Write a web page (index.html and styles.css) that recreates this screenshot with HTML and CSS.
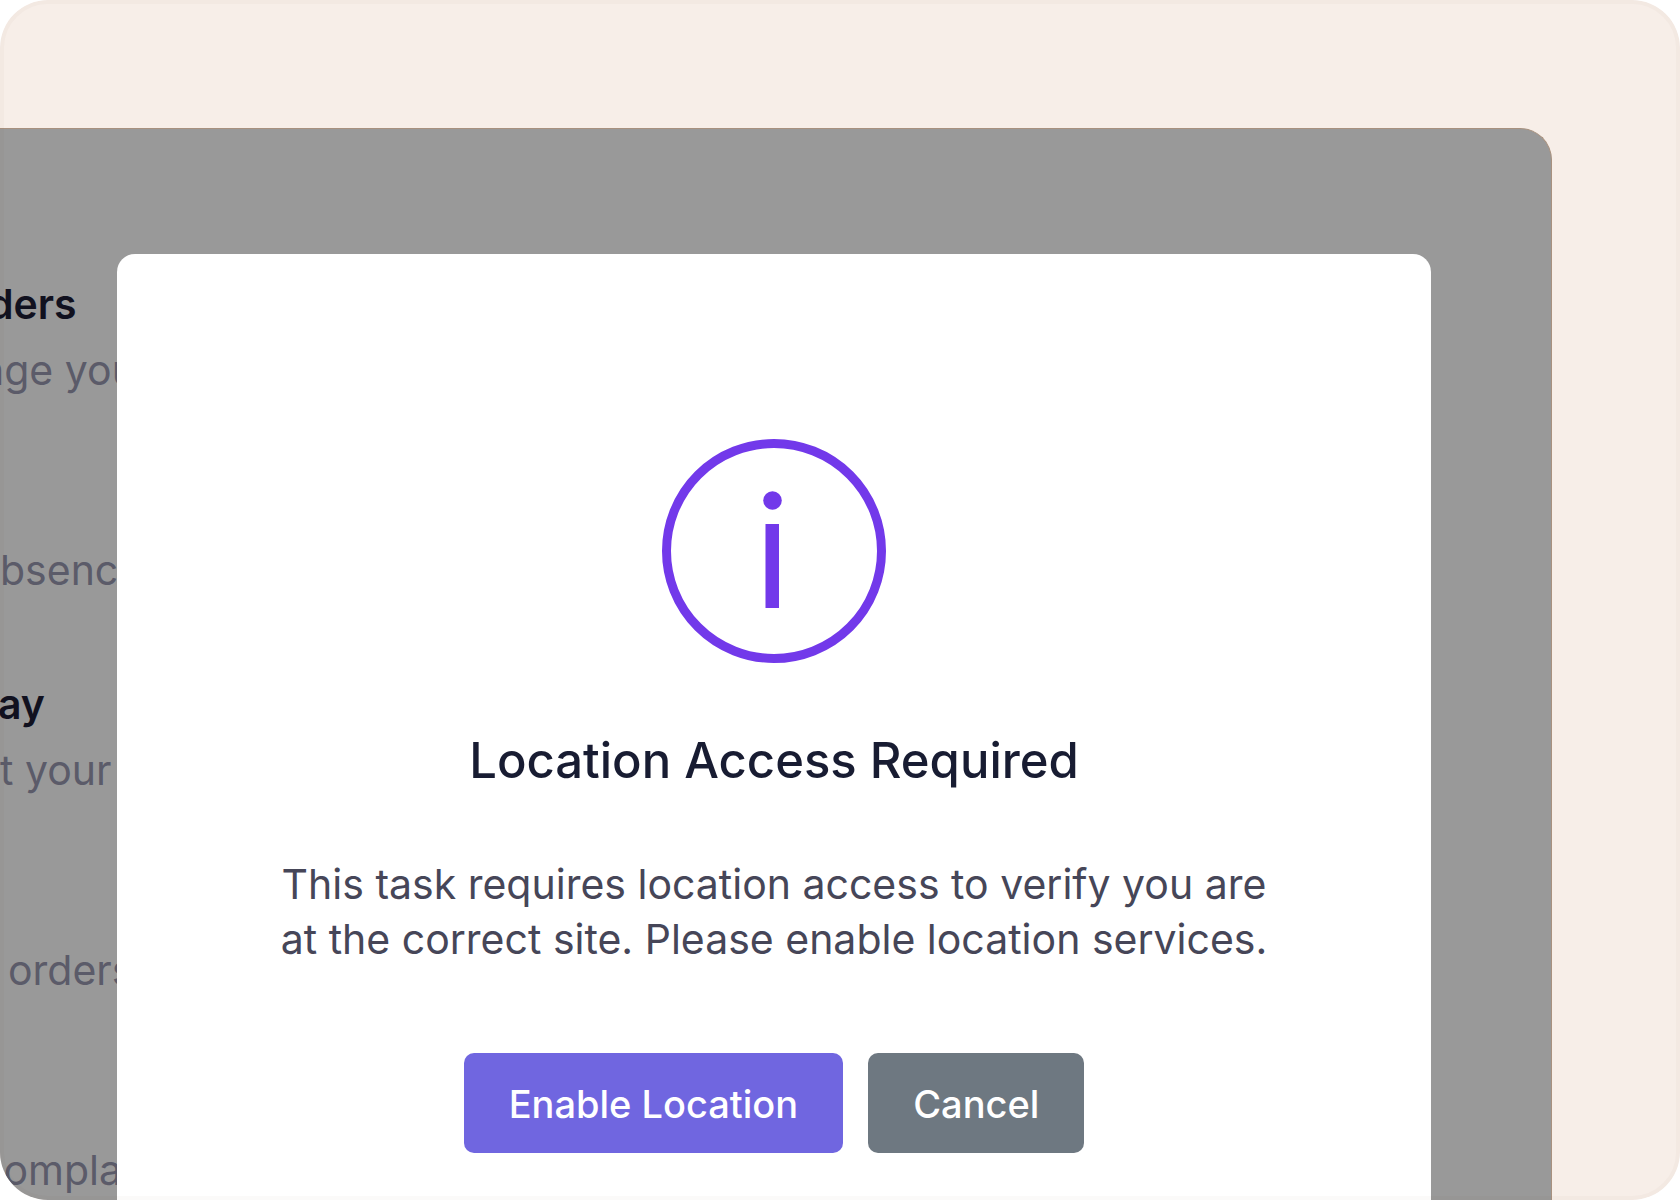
FILE: index.html
```
<!DOCTYPE html>
<html lang="en">
<head>
    <meta charset="UTF-8">
    <title>Location Access Required</title>
    <link rel="stylesheet" href="styles.css">
</head>
<body>
<main class="frame">
    <div class="panel">
        <ul class="list">
            <li><h3 class="half">ders</h3><p class="cut">nge your</p></li>
            <li><p>bsence</p></li>
            <li><h3>ay</h3><p>t your</p></li>
            <li><p class="space">orders</p></li>
            <li><p class="cut">complaints</p></li>
        </ul>
        <section class="modal" role="dialog" aria-labelledby="title" aria-describedby="text">
            <svg class="icon" viewBox="0 0 224 224" aria-hidden="true">
                <circle cx="112" cy="112" r="107.5" fill="none" stroke="#7239ea" stroke-width="9"/>
                <circle cx="110.5" cy="61.5" r="9.3" fill="#7239ea"/>
                <rect x="103.5" y="85" width="13.5" height="84" fill="#7239ea"/>
            </svg>
            <h2 id="title">Location Access Required</h2>
            <p id="text" class="text">This task requires location access to verify you are at the correct site. Please enable location services.</p>
            <div class="btns">
                <button type="button" class="btn enable">Enable Location</button>
                <button type="button" class="btn cancel">Cancel</button>
            </div>
        </section>
    </div>
</main>
</body>
</html>
```
FILE: styles.css
```
*{box-sizing: border-box}
body{
    margin: 0;
    background: #fff;
    font-family: Inter, "Liberation Sans", sans-serif;
}
h2,h3,p,ul{
    margin: 0;
    padding: 0;
}
.frame{
    height: 100vh;
    padding: 128px 128px 0 0;
    border-radius: 48px;
    background: #f7eee8;
    position: relative;
    overflow: hidden;
}
/* 最外层描边，盖在内容上面 */
.frame::after{
    content: "";
    position: absolute;
    inset: 0;
    border: 4px solid rgba(80,50,10,.025);
    border-radius: 48px;
    pointer-events: none;
}
.panel{
    display: grid;
    height: 100%;
    border-top: 1px solid #a8917f;
    border-right: 1px solid #a8917f;
    border-radius: 0 32px 0 0;
    background: #999;
    overflow: hidden;
}
.list,.modal{
    grid-area: 1 / 1;
}
.list{
    display: flex;
    flex-direction: column;
    gap: 68px;
    padding-top: 142px;
    list-style: none;
    white-space: nowrap;
}
.list li{
    display: flex;
    flex-direction: column;
    justify-content: flex-end;
    flex: 0 0 132px;
}
.list h3{
    margin-left: -2px;
    font-size: 41px;
    font-weight: 600;
    line-height: 66px;
    color: #11111f;
}
.list p{
    font-size: 41px;
    line-height: 66px;
    color: #5b5b69;
}
.list .half{margin-left: -12px}
.list .cut{margin-left: -20px}
.list .space{margin-left: 8px}
.modal{
    display: flex;
    flex-direction: column;
    align-items: center;
    margin: 125px 120px 0 117px;
    padding: 185px 120px 0;
    border-radius: 18px 18px 0 0;
    background: #fff;
    text-align: center;
}
.icon{
    flex: none;
    width: 224px;
    height: 224px;
}
.modal h2{
    margin-top: 64px;
    font-size: 49px;
    font-weight: 500;
    line-height: 68px;
    color: #181c32;
}
.text{
    max-width: 1010px;
    margin-top: 62px;
    font-size: 41px;
    line-height: 55px;
    color: #464658;
}
.btns{
    display: flex;
    gap: 25px;
    margin-top: 86px;
}
.btn{
    height: 100px;
    padding: 2px 45px 0;
    border: 0;
    border-radius: 10px;
    font-family: inherit;
    font-size: 38px;
    font-weight: 500;
    color: #fff;
    white-space: nowrap;
}
.enable{background: #7066e0}
.cancel{background: #6e7881}
```
